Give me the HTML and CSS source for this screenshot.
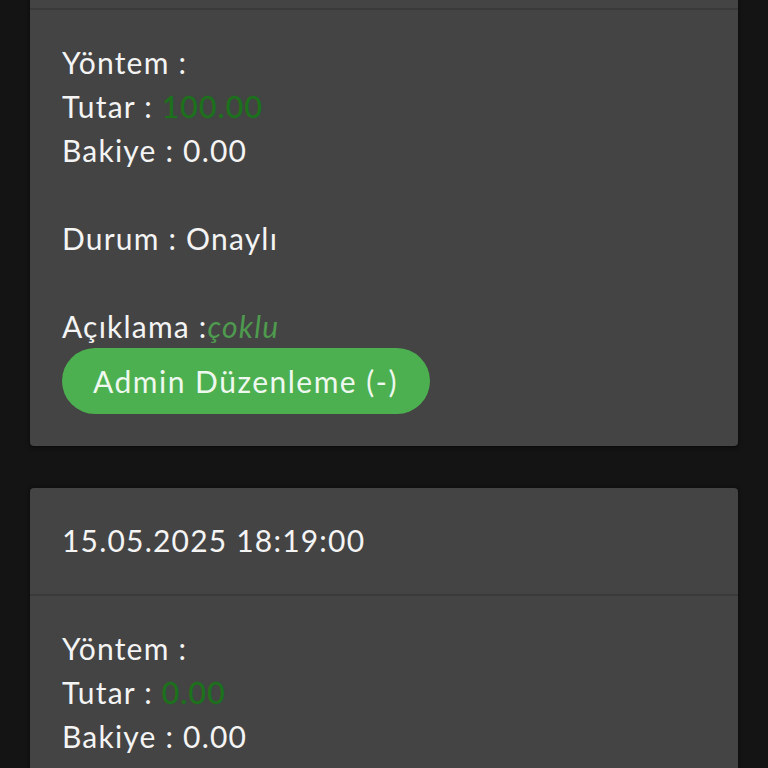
FILE: index.html
```html
<!DOCTYPE html>
<html lang="tr">
<head>
    <meta charset="UTF-8">
    <title>Hesap Hareketleri</title>
    <link rel="stylesheet" href="styles.css">
</head>
<body>
    <div class="list">
        <div class="card">
            <div class="card-header">15.05.2025 18:20:00</div>
            <div class="card-body">
                <div class="row">Yöntem : </div>
                <div class="row">Tutar : <span class="amount">100.00</span></div>
                <div class="row">Bakiye : 0.00</div>
                <div class="row empty"></div>
                <div class="row">Durum : Onaylı</div>
                <div class="row empty"></div>
                <div class="row">Açıklama :<span class="note">çoklu</span></div>
                <button class="btn-admin">Admin Düzenleme (-)</button>
            </div>
        </div>

        <div class="card">
            <div class="card-header">15.05.2025 18:19:00</div>
            <div class="card-body">
                <div class="row">Yöntem : </div>
                <div class="row">Tutar : <span class="amount">0.00</span></div>
                <div class="row">Bakiye : 0.00</div>
                <div class="row empty"></div>
                <div class="row">Durum : Onaylı</div>
                <div class="row empty"></div>
                <div class="row">Açıklama :<span class="note">çoklu</span></div>
                <button class="btn-admin">Admin Düzenleme (-)</button>
            </div>
        </div>
    </div>
</body>
</html>
```

FILE: styles.css
```css
body {
    margin: 0;
    background-color: #141414;
    font-family: Lato, "Open Sans", sans-serif;
    color: #f4f4f4;
    overflow: hidden;
}
.list {
    display: flex;
    flex-direction: column;
    gap: 42px;
    padding: 0 30px;
    margin-top: -98px;
}
.card {
    background-color: #444444;
    border-radius: 4px;
    box-shadow: 0 1px 4px rgba(0, 0, 0, 0.6);
}
.card-header {
    font-size: 30px;
    line-height: 44px;
    letter-spacing: 1.2px;
    padding: 30px 32px 32px;
    border-bottom: 2px solid #3a3a3a;
}
.card-body {
    padding: 30px 32px 32px;
}
.row {
    font-size: 30px;
    line-height: 44px;
    letter-spacing: 1.2px;
}
.row.empty {
    height: 44px;
}
.amount {
    color: #1b721b;
    text-shadow: 0 0 2px rgba(30, 120, 30, 0.5);
}
.note {
    color: #4e9a4e;
    font-style: italic;
}
.btn-admin {
    display: block;
    height: 66px;
    padding: 0 32px 0 31px;
    background-color: #4cb050;
    color: #eef8ee;
    border: none;
    border-radius: 33px;
    font-family: inherit;
    font-size: 30px;
    letter-spacing: 1.5px;
    cursor: pointer;
}
```
